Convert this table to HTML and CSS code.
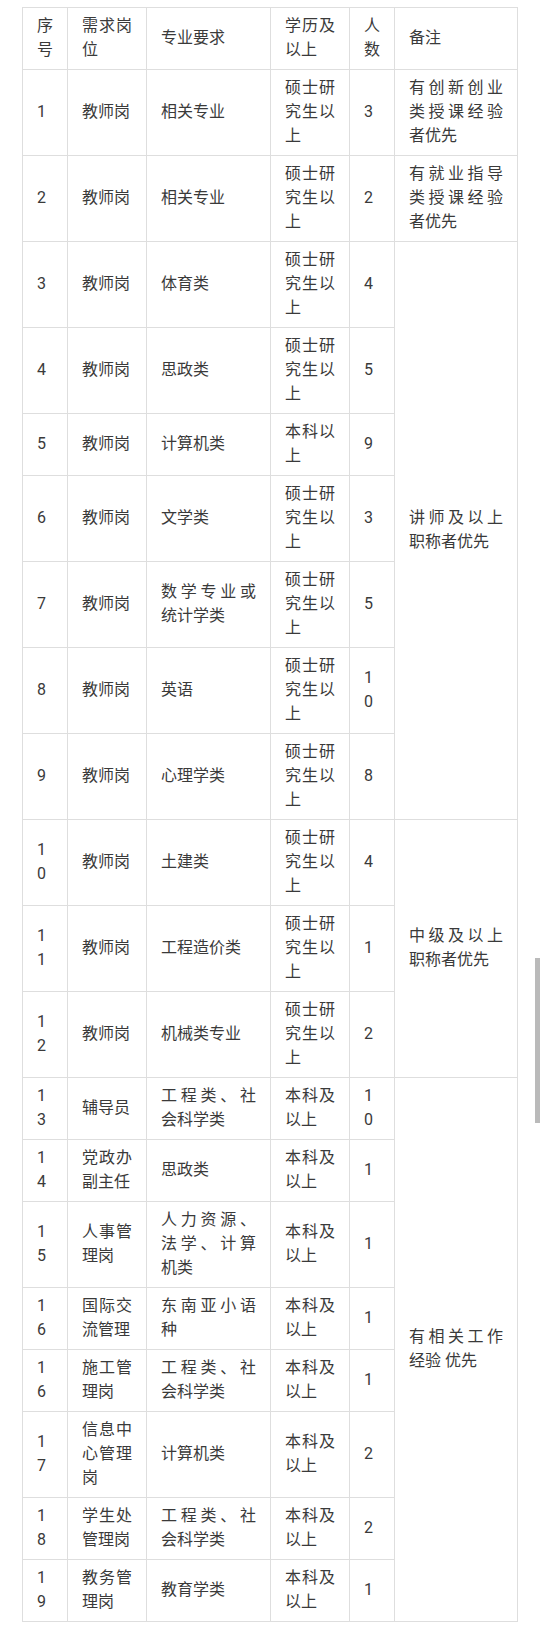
FILE: index.html
```html
<!DOCTYPE html>
<html lang="zh-CN">
<head>
<meta charset="utf-8">
<title>岗位需求表</title>
<link rel="stylesheet" href="styles.css">
</head>
<body>
<div class="page">
  <table class="jobs">
    <colgroup>
      <col class="c-no"><col class="c-post"><col class="c-major"><col class="c-edu"><col class="c-num"><col class="c-note">
    </colgroup>
    <tbody>
      <tr><td>序号</td><td>需求岗位</td><td>专业要求</td><td>学历及以上</td><td>人数</td><td>备注</td></tr>
      <tr><td>1</td><td>教师岗</td><td>相关专业</td><td>硕士研究生以上</td><td>3</td><td>有创新创业类授课经验者优先</td></tr>
      <tr><td>2</td><td>教师岗</td><td>相关专业</td><td>硕士研究生以上</td><td>2</td><td>有就业指导类授课经验者优先</td></tr>
      <tr><td>3</td><td>教师岗</td><td>体育类</td><td>硕士研究生以上</td><td>4</td><td rowspan="7">讲师及以上职称者优先</td></tr>
      <tr><td>4</td><td>教师岗</td><td>思政类</td><td>硕士研究生以上</td><td>5</td></tr>
      <tr><td>5</td><td>教师岗</td><td>计算机类</td><td>本科以上</td><td>9</td></tr>
      <tr><td>6</td><td>教师岗</td><td>文学类</td><td>硕士研究生以上</td><td>3</td></tr>
      <tr><td>7</td><td>教师岗</td><td>数学专业或统计学类</td><td>硕士研究生以上</td><td>5</td></tr>
      <tr><td>8</td><td>教师岗</td><td>英语</td><td>硕士研究生以上</td><td>10</td></tr>
      <tr><td>9</td><td>教师岗</td><td>心理学类</td><td>硕士研究生以上</td><td>8</td></tr>
      <tr><td>10</td><td>教师岗</td><td>土建类</td><td>硕士研究生以上</td><td>4</td><td rowspan="3">中级及以上职称者优先</td></tr>
      <tr><td>11</td><td>教师岗</td><td>工程造价类</td><td>硕士研究生以上</td><td>1</td></tr>
      <tr><td>12</td><td>教师岗</td><td>机械类专业</td><td>硕士研究生以上</td><td>2</td></tr>
      <tr><td>13</td><td>辅导员</td><td>工程类、社会科学类</td><td>本科及以上</td><td>10</td><td rowspan="8">有相关工作经验 优先</td></tr>
      <tr><td>14</td><td>党政办副主任</td><td>思政类</td><td>本科及以上</td><td>1</td></tr>
      <tr><td>15</td><td>人事管理岗</td><td>人力资源、法学、计算机类</td><td>本科及以上</td><td>1</td></tr>
      <tr><td>16</td><td>国际交流管理</td><td>东南亚小语种</td><td>本科及以上</td><td>1</td></tr>
      <tr><td>16</td><td>施工管理岗</td><td>工程类、社会科学类</td><td>本科及以上</td><td>1</td></tr>
      <tr><td>17</td><td>信息中心管理岗</td><td>计算机类</td><td>本科及以上</td><td>2</td></tr>
      <tr><td>18</td><td>学生处管理岗</td><td>工程类、社会科学类</td><td>本科及以上</td><td>2</td></tr>
      <tr><td>19</td><td>教务管理岗</td><td>教育学类</td><td>本科及以上</td><td>1</td></tr>
    </tbody>
  </table>
</div>
<div class="scroll-thumb"></div>
</body>
</html>
```

FILE: styles.css
```css
html, body {
  margin: 0;
  padding: 0;
  background: #ffffff;
}

.page {
  padding: 7px 0 0 22px;
}

.jobs {
  border-collapse: collapse;
  table-layout: fixed;
  width: 495px;
  font-family: Roboto, "Noto Sans CJK SC", sans-serif;
  font-size: 16px;
  line-height: 24px;
  color: #3a3a3a;
}

.c-no { width: 45px; }
.c-post { width: 79px; }
.c-major { width: 124px; }
.c-edu { width: 79px; }
.c-num { width: 45px; }
.c-note { width: 123px; }

.jobs td {
  border: 1px solid #dedede;
  padding: 6px 14px 7px 14px;
  vertical-align: middle;
  text-align: justify;
  word-break: break-all;
}

.scroll-thumb {
  position: fixed;
  right: 0;
  top: 958px;
  width: 5px;
  height: 165px;
  background: #bababa;
}
```
